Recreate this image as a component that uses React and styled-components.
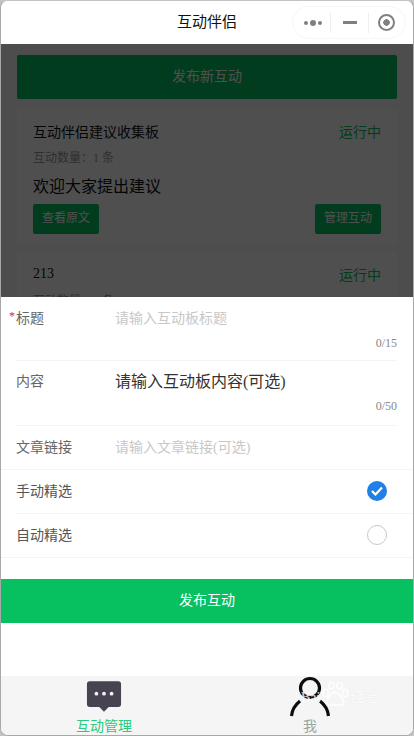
import React from "react";
import styled, { createGlobalStyle, css } from "styled-components";

const FONT = `"Liberation Serif", "Noto Sans CJK SC", serif`;

// CJK glyphs sit low in the serif line box, this pulls them back up when centred
const lift = css`
  padding-bottom: 4px;
`;

const GlobalStyle = createGlobalStyle`
  html, body {
    margin: 0;
    padding: 0;
    background: #c4c4c4;
  }
  * {
    box-sizing: border-box;
  }
`;

function PaperIcon() {
  return (
    <svg width="36" height="33" viewBox="0 0 38 34">
      <path fill="#474350" d="M4 1h30a3 3 0 0 1 3 3v21a3 3 0 0 1-3 3H24l-5 5-5-5H4a3 3 0 0 1-3-3V4a3 3 0 0 1 3-3z" />
      <circle cx="11" cy="14" r="2" fill="#f2f2f2" />
      <circle cx="19" cy="14" r="2" fill="#f2f2f2" />
      <circle cx="27" cy="14" r="2" fill="#f2f2f2" />
    </svg>
  );
}

function PersonIcon() {
  return (
    <svg width="42" height="42" viewBox="0 0 42 42">
      <circle cx="21" cy="12" r="9.5" fill="none" stroke="#0d0d0d" strokeWidth="3.2" />
      <path fill="none" stroke="#0d0d0d" strokeWidth="3.2" d="M11 25C6 29 3 34 2.5 40M31 25c5 4 8 9 8.500 15" />
    </svg>
  );
}

function Paw() {
  return (
    <svg width="28" height="26" viewBox="0 0 30 28">
      <g fill="none" stroke="#fff" strokeWidth="2">
        <ellipse cx="5" cy="12" rx="3" ry="4" />
        <ellipse cx="11" cy="4" rx="3" ry="3.500" />
        <ellipse cx="20" cy="4" rx="3" ry="3.500" />
        <ellipse cx="26" cy="12" rx="3" ry="4" />
        <path d="M15 11c-4 0-5 4-8 7-3 4 0 8 4 7 3-1 5-1 8 0 4 1 7-3 4-7-3-3-4-7-8-7z" />
      </g>
    </svg>
  );
}

function App() {
  return (
    <Shell>
      <GlobalStyle />
      <NavBar>
        <NavTitle>互动伴侣</NavTitle>
        <Capsule>
          <Dots>
            <Dot />
            <Dot $big />
            <Dot />
          </Dots>
          <CapsuleLine />
          <Dash />
          <CapsuleLine />
          <Target />
        </Capsule>
      </NavBar>

      <Main>
        <PublishNew>发布新互动</PublishNew>
        <Card>
          <CardHead>
            <CardTitle>互动伴侣建议收集板</CardTitle>
            <Running>运行中</Running>
          </CardHead>
          <Count>互动数量：1 条</Count>
          <Intro>欢迎大家提出建议</Intro>
          <CardActions>
            <SmallButton>查看原文</SmallButton>
            <SmallButton>管理互动</SmallButton>
          </CardActions>
        </Card>
        <Card>
          <CardHead>
            <CardTitle>213</CardTitle>
            <Running>运行中</Running>
          </CardHead>
          <Count>互动数量：4 条</Count>
        </Card>

        <Overlay />

        <Sheet>
          <FieldGroup>
            <FieldRow>
              <Label>
                <Star>*</Star>标题
              </Label>
              <Placeholder>请输入互动板标题</Placeholder>
            </FieldRow>
            <Counter>0/15</Counter>
          </FieldGroup>
          <FieldGroup $content>
            <FieldRow>
              <Label>内容</Label>
              <ContentHint>请输入互动板内容(可选)</ContentHint>
            </FieldRow>
            <Counter>0/50</Counter>
          </FieldGroup>
          <LinkRow>
            <Label>文章链接</Label>
            <Placeholder>请输入文章链接(可选)</Placeholder>
          </LinkRow>
          <Option $inset>
            <OptionLabel>手动精选</OptionLabel>
            <Checked>
              <svg width="12" height="10" viewBox="0 0 12 10">
                <path fill="none" stroke="#fff" strokeWidth="2.2" d="M1 5l3.500 3.500L11 1.500" />
              </svg>
            </Checked>
          </Option>
          <Option>
            <OptionLabel>自动精选</OptionLabel>
            <Unchecked />
          </Option>
          <Submit>发布互动</Submit>
        </Sheet>
      </Main>

      <TabBar>
        <Tab $active>
          <TabIcon $paper>
            <PaperIcon />
          </TabIcon>
          互动管理
        </Tab>
        <Tab>
          <TabIcon>
            <PersonIcon />
          </TabIcon>
          我
        </Tab>
        <Watermark>
          <WatermarkText>Bai</WatermarkText>
          <Paw />
          <WatermarkText>经验</WatermarkText>
        </Watermark>
      </TabBar>
    </Shell>
  );
}

export default App;

const Shell = styled.div`
  position: relative;
  width: 414px;
  height: 736px;
  display: flex;
  flex-direction: column;
  overflow: hidden;
  background: #fff;
  border: 1px solid #a8a8a8;
  border-top-color: #c4c4c4;
  border-radius: 8px;
  font-family: ${FONT};
`;

const NavBar = styled.div`
  position: relative;
  flex: none;
  height: 43px;
  display: flex;
  align-items: center;
  justify-content: center;
  background: #fff;
`;

const NavTitle = styled.div`
  ${lift}
  font-size: 15px;
  color: #111;
`;

const Capsule = styled.div`
  position: absolute;
  top: 5px;
  right: 7px;
  width: 114px;
  height: 33px;
  display: flex;
  align-items: center;
  padding-left: 3px;
  border: 1px solid #f6f6f6;
  border-radius: 17px;
`;

const Dots = styled.div`
  width: 34px;
  display: flex;
  align-items: center;
  justify-content: center;
  gap: 2px;
`;

const Dot = styled.span`
  width: ${(p) => (p.$big ? 6 : 4)}px;
  height: ${(p) => (p.$big ? 6 : 4)}px;
  border-radius: 50%;
  background: #808080;
`;

const CapsuleLine = styled.span`
  width: 1px;
  height: 20px;
  background: #efefef;
`;

const Dash = styled.span`
  width: 14px;
  height: 3px;
  margin: 0 11px 0 12px;
  background: #808080;
`;

const Target = styled.span`
  width: 17px;
  height: 17px;
  margin-left: 9px;
  border: 2px solid #808080;
  border-radius: 50%;
  background: radial-gradient(circle, #808080 0 3px, transparent 3.5px);
`;

const Main = styled.div`
  position: relative;
  flex: 1;
  overflow: hidden;
  padding: 11px 16px 0;
  background: #f8f8f8;
`;

const PublishNew = styled.div`
  ${lift}
  height: 44px;
  display: flex;
  align-items: center;
  justify-content: center;
  border-radius: 2px;
  background: #07c160;
  color: #fff;
  font-size: 14px;
`;

const Card = styled.div`
  margin-top: 10px;
  padding: 14px 16px 11px;
  background: #fff;

  & + & {
    margin-top: 7px;
  }
`;

const CardHead = styled.div`
  display: flex;
  justify-content: space-between;
  align-items: center;
  height: 20px;
`;

const CardTitle = styled.div`
  ${lift}
  font-size: 14px;
  color: #111;
`;

const Running = styled.div`
  ${lift}
  font-size: 14px;
  color: #07c160;
`;

const Count = styled.div`
  margin-top: 7px;
  font-size: 12px;
  line-height: 17px;
  color: #999;
`;

const Intro = styled.div`
  margin-top: 8px;
  font-size: 16px;
  line-height: 24px;
  color: #111;
`;

const CardActions = styled.div`
  display: flex;
  justify-content: space-between;
  margin-top: 5px;
`;

const SmallButton = styled.div`
  ${lift}
  width: 66px;
  height: 30px;
  display: flex;
  align-items: center;
  justify-content: center;
  border-radius: 2px;
  background: #07c160;
  color: #fff;
  font-size: 12px;
`;

const Overlay = styled.div`
  position: absolute;
  inset: 0;
  background: rgba(0, 0, 0, 0.69);
`;

const Sheet = styled.div`
  position: absolute;
  left: 0;
  right: 0;
  bottom: 0;
  height: 379px;
  background: #fff;
`;

const FieldGroup = styled.div`
  height: ${(p) => (p.$content ? 65 : 64)}px;
  margin: 0 16px 0 15px;
  padding-top: ${(p) => (p.$content ? 11 : 12)}px;
  border-bottom: 1px solid #f4f4f4;
`;

const FieldRow = styled.div`
  display: flex;
  align-items: center;
  height: 20px;
`;

const Label = styled.div`
  ${lift}
  position: relative;
  width: 99px;
  flex: none;
  font-size: 14px;
  color: #666;
`;

const Star = styled.span`
  position: absolute;
  left: -7px;
  top: 2px;
  color: #d8264a;
  font-size: 12px;
`;

const Placeholder = styled.div`
  ${lift}
  font-size: 14px;
  color: #c8c8c8;
`;

const ContentHint = styled.div`
  ${lift}
  font-size: 16px;
  color: #333;
`;

const Counter = styled.div`
  margin-top: 7px;
  text-align: right;
  font-size: 12px;
  line-height: 14px;
  color: #888;
`;

const LinkRow = styled.div`
  height: 44px;
  display: flex;
  align-items: center;
  padding: 0 16px 0 15px;
  border-bottom: 1px solid #f4f4f4;
`;

const Option = styled.div`
  height: 44px;
  display: flex;
  align-items: center;
  justify-content: space-between;
  margin-left: ${(p) => (p.$inset ? 15 : 0)}px;
  padding: 0 26px 0 ${(p) => (p.$inset ? 0 : 15)}px;
  border-bottom: 1px solid #f4f4f4;
`;

const OptionLabel = styled.div`
  ${lift}
  font-size: 14px;
  color: #555;
`;

const Checked = styled.span`
  width: 20px;
  height: 20px;
  margin-bottom: 2px;
  display: flex;
  align-items: center;
  justify-content: center;
  border-radius: 50%;
  background: #1f80e8;
`;

const Unchecked = styled.span`
  width: 20px;
  height: 20px;
  margin-bottom: 2px;
  border: 1px solid #c8c8c8;
  border-radius: 50%;
`;

const Submit = styled.div`
  ${lift}
  height: 44px;
  margin-top: 21px;
  display: flex;
  align-items: center;
  justify-content: center;
  background: #07c160;
  color: #fff;
  font-size: 14px;
`;

const TabBar = styled.div`
  position: relative;
  flex: none;
  height: 59px;
  display: flex;
  background: #f5f5f5;
`;

const Tab = styled.div`
  flex: 1;
  display: flex;
  flex-direction: column;
  align-items: center;
  justify-content: flex-end;
  padding-bottom: 1px;
  font-size: 14px;
  line-height: 14px;
  color: ${(p) => (p.$active ? "#2ac982" : "#9aa5a0")};
`;

const TabIcon = styled.div`
  height: 44px;
  padding-bottom: 4px;
  display: flex;
  align-items: ${(p) => (p.$paper ? "center" : "flex-start")};
  justify-content: center;
`;

const Watermark = styled.div`
  position: absolute;
  left: 300px;
  top: 6px;
  display: flex;
  align-items: flex-end;
  gap: 1px;
  opacity: 0.8;
`;

const WatermarkText = styled.span`
  font-size: 14px;
  line-height: 20px;
  color: #fff;
  text-shadow: 0 0 1px #ddd;
`;
